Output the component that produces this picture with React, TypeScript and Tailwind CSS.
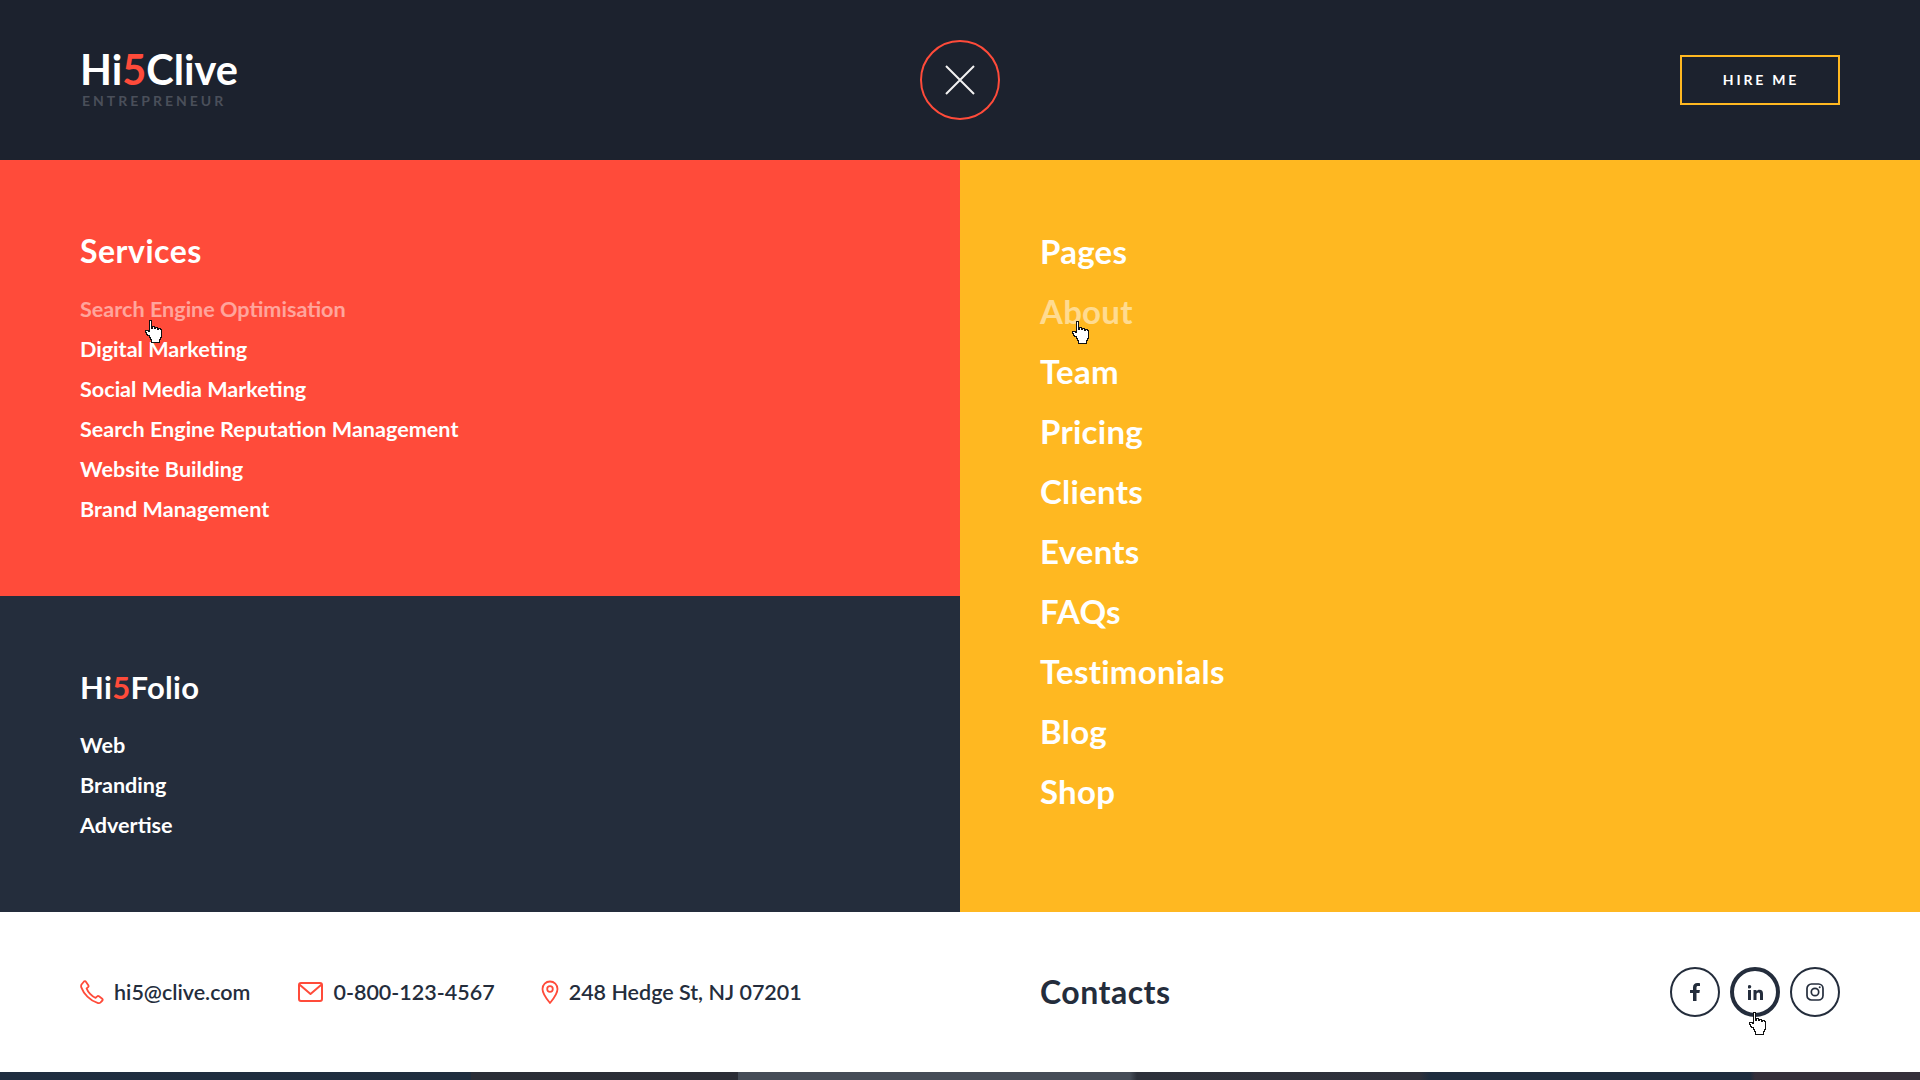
import React from "react";

function Cursor({ className }: { className: string }) {
  return (
    <svg className={className} width="19" height="24" viewBox="0 0 19 24" shapeRendering="crispEdges">
      <path d="M5 1h2v8h1V7h2v2h1V8h2v2h1V9h2v1h1v8h-1v2h-1v3H7v-3H6v-2H5v-2H3v-1H2v-2H1v-2h3v1h1z" fill="#fff" stroke="#111" strokeWidth="1" />
    </svg>
  );
}

function Hi({ a, b }: { a: string; b: string }) {
  return (
    <>
      {a}
      <span className="text-[#ff4b3a]">5</span>
      {b}
    </>
  );
}

const services = ["Digital Marketing", "Social Media Marketing", "Search Engine Reputation Management", "Website Building", "Brand Management"];
const pages = ["Team", "Pricing", "Clients", "Events", "FAQs", "Testimonials", "Blog", "Shop"];

export default function App() {
  return (
    <div className="w-[1920px] h-[1080px] overflow-hidden flex flex-col font-['Lato','Open_Sans',sans-serif] bg-[#1f2a3a]">
      <header className="h-[160px] shrink-0 bg-[#1c222e] px-20 grid grid-cols-3 items-center">
        <div className="mt-[-6px]">
          <div className="text-[41.500px] leading-[44px] font-bold text-white">
            <Hi a="Hi" b="Clive" />
          </div>
          <div className="text-[14px] leading-[14px] font-bold tracking-[3px] text-[#4a4f5a] ml-[2px] mt-[3px]">ENTREPRENEUR</div>
        </div>
        <div className="flex justify-center">
          <button className="w-20 h-20 rounded-full border-2 border-[#ff4b3a] flex items-center justify-center">
            <svg width="32" height="32" viewBox="0 0 32 32" stroke="#f2f2f2" strokeWidth="2" fill="none">
              <path d="M2 2 30 30M30 2 2 30" />
            </svg>
          </button>
        </div>
        <div className="flex justify-end">
          <button className="w-[160px] h-[50px] border-2 border-[#ffb821] text-white text-[14px] leading-[44px] font-bold tracking-[2.800px] pl-[2px]">HIRE ME</button>
        </div>
      </header>

      <main className="h-[752px] shrink-0 grid grid-cols-2">
        <div className="flex flex-col">
          <section className="h-[436px] shrink-0 bg-[#ff4b3a] pl-20 pt-[72px]">
            <h2 className="text-[32px] leading-[38px] font-bold text-white tracking-[0.500px]">Services</h2>
            <ul className="mt-[19px] text-[21.600px] leading-[40px] font-bold text-white">
              <li className="relative text-white/50">
                Search Engine Optimisation
                <Cursor className="absolute left-[64px] top-[30px]" />
              </li>
              {services.map((s) => (
                <li key={s}>{s}</li>
              ))}
            </ul>
          </section>
          <section className="flex-1 bg-[#242d3c] pl-20 pt-[72px]">
            <h2 className="text-[31px] leading-[38px] font-bold text-white tracking-[0.300px]">
              <Hi a="Hi" b="Folio" />
            </h2>
            <ul className="mt-[19px] text-[21.600px] leading-[40px] font-bold text-white">
              <li>Web</li>
              <li>Branding</li>
              <li>Advertise</li>
            </ul>
          </section>
        </div>
        <section className="bg-[#ffb821] pl-20 pt-[61px]">
          <ul className="text-[33px] leading-[60px] font-bold text-white tracking-[0.250px]">
            <li>Pages</li>
            <li className="relative text-white/50">
              About
              <Cursor className="absolute left-[31px] top-[39px]" />
            </li>
            {pages.map((p) => (
              <li key={p}>{p}</li>
            ))}
          </ul>
        </section>
      </main>

      <footer className="h-[160px] shrink-0 bg-white grid grid-cols-2 items-center">
        <div className="pl-20 flex items-center text-[21.500px] font-semibold text-[#242d3c]">
          <svg width="24" height="24" viewBox="0 0 24 24" fill="none" stroke="#ff4b3a" strokeWidth="1.800" strokeLinecap="round" strokeLinejoin="round">
            <path d="M1.500 4.500 4 1.500c.6-.6 1.400-.5 1.900.2l2.400 3.600c.4.6.3 1.300-.2 1.800L6.600 8.400c1.200 3.500 5.200 8 9 9.500l1.600-1.500c.5-.5 1.200-.5 1.800-.1l3.200 2.400c.6.5.7 1.200.2 1.800l-1.800 1.800c-1 .9-2 .9-3.100.5C10 20.700 3.500 13.500 1.300 7.400 1 6.300 1 5.300 1.500 4.500z" />
          </svg>
          <span className="ml-[10px]">hi5@clive.com</span>
          <svg className="ml-[48px]" width="26" height="22" viewBox="0 0 26 22" fill="none" stroke="#ff4b3a" strokeWidth="2" strokeLinejoin="round" strokeLinecap="round">
            <rect x="1" y="2" width="23" height="18" rx="2" />
            <path d="M2 4l10.500 9L23 4" />
          </svg>
          <span className="ml-[9px]">0-800-123-4567</span>
          <svg className="ml-[45px]" width="20" height="24" viewBox="0 0 20 24" fill="none" stroke="#ff4b3a" strokeWidth="1.800" strokeLinejoin="round">
            <path d="M10 23C6 18 2.500 14 2.500 9a7.500 7.500 0 0 1 15 0c0 5-3.500 9-7.500 14z" />
            <circle cx="10" cy="9" r="2.800" />
          </svg>
          <span className="ml-[9px]">248 Hedge St, NJ 07201</span>
        </div>
        <div className="pl-20 pr-20 flex items-center justify-between">
          <h2 className="text-[32px] font-bold text-[#242d3c] tracking-[0.500px]">Contacts</h2>
          <div className="flex items-center gap-[10px] text-[#242d3c]">
            <a className="w-[50px] h-[50px] rounded-full border-2 border-[#242d3c] flex items-center justify-center">
              <svg width="10" height="18" viewBox="0 0 10 18" fill="currentColor"><path d="M3 18V10H0V7h3V4.500C3 1.600 4.700 0 7.300 0 8.500 0 9.500.1 10 .2v2.800H8.200C6.800 3 6.500 3.700 6.500 4.700V7h3.400l-.5 3H6.500v8z" /></svg>
            </a>
            <a className="relative w-[50px] h-[50px] rounded-full border-[4px] border-[#242d3c] flex items-center justify-center">
              <svg width="15" height="15" viewBox="0 0 15 15" fill="currentColor"><rect x="0" y="5" width="3" height="10" /><circle cx="1.500" cy="1.800" r="1.800" /><path d="M5.500 5h3v1.400C9 5.500 10 4.800 11.500 4.800c2.500 0 3.500 1.500 3.500 4V15h-3V9.400c0-1.300-.4-2-1.500-2-1.200 0-2 .8-2 2.200V15h-3z" /></svg>
              <Cursor className="absolute left-[14px] top-[40px]" />
            </a>
            <a className="w-[50px] h-[50px] rounded-full border-2 border-[#242d3c] flex items-center justify-center">
              <svg width="18" height="18" viewBox="0 0 18 18" fill="none" stroke="currentColor" strokeWidth="1.700"><rect x="1" y="1" width="16" height="16" rx="4.500" /><circle cx="9" cy="9" r="3.700" /><circle cx="13.700" cy="4.300" r="1" fill="currentColor" stroke="none" /></svg>
            </a>
          </div>
        </div>
      </footer>

      <div className="flex-1 bg-[linear-gradient(90deg,#1f2d40_0,#1f2d3e_471px,#2a2d36_471px,#2b2d36_738px,#454c57_738px,#454c57_1130px,#2c303a_1137px,#2e303b_1420px,#1e2c3e_1430px,#1e2c3e_1750px,#352f3a_1755px,#352f3a_1920px)]" />
    </div>
  );
}
